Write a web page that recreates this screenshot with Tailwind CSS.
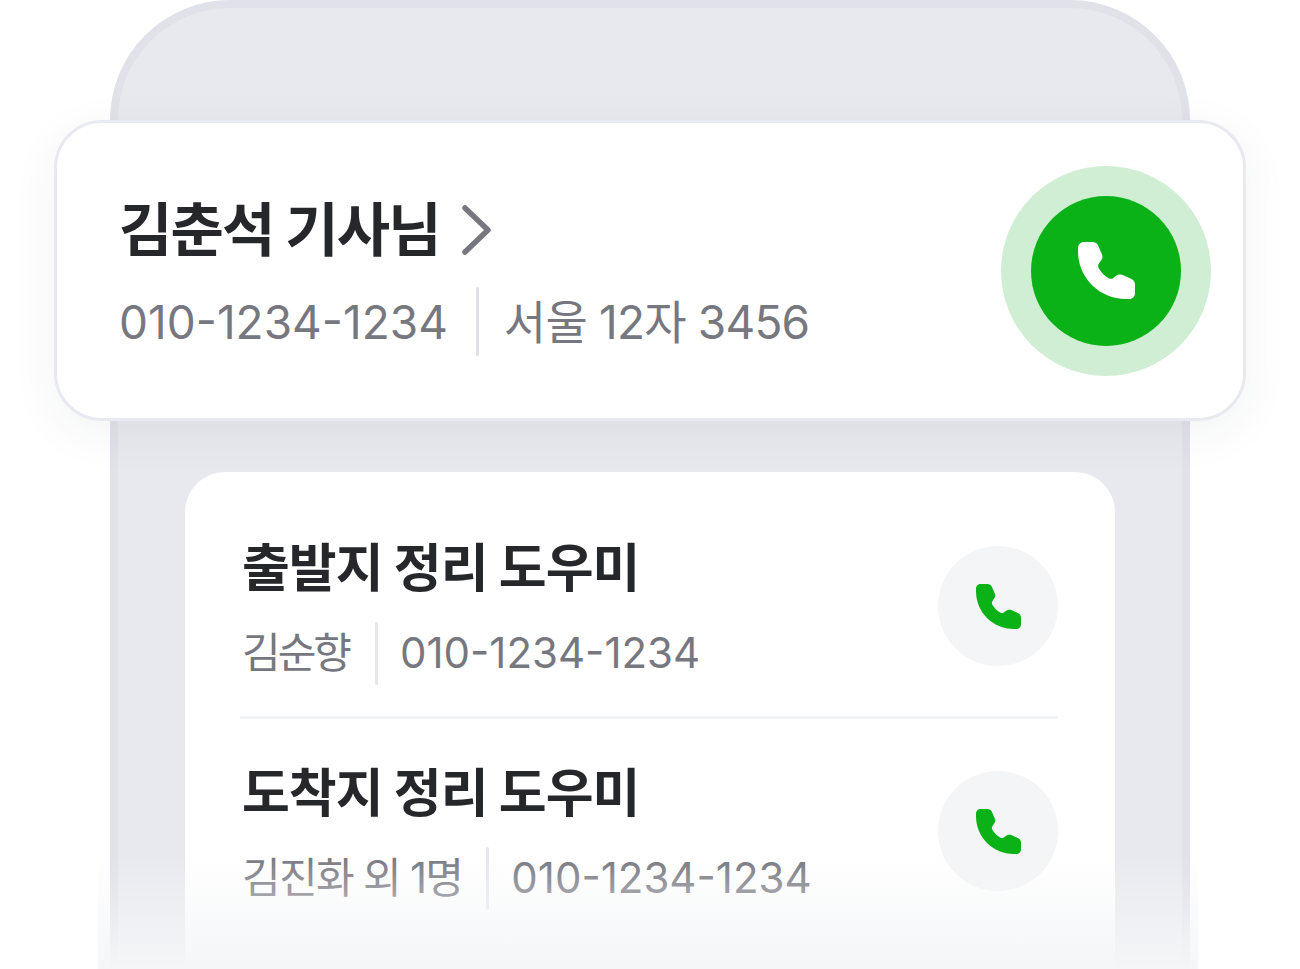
<!DOCTYPE html>
<html lang="ko">
<head>
    <meta charset="UTF-8">
    <meta name="viewport" content="width=device-width, initial-scale=1.0">
    <title>기사님 연락처</title>
    <script src="https://cdn.jsdelivr.net/npm/@tailwindcss/browser@4"></script>
</head>
<body class="bg-white">
    <main class="relative w-[1300px] h-[969px] overflow-hidden bg-white font-['Inter','Noto_Sans_CJK_KR',sans-serif]">
        <!-- 폰 프레임 -->
        <div class="mx-[110px] h-[1100px] rounded-t-[120px] border-[8px] border-b-0 border-[#e0e1e9] bg-[#e8e9ee] pt-[112px]">
            <!-- 기사님 카드 -->
            <section class="relative -mx-[64px] flex h-[301px] items-center justify-between rounded-[48px] border-[3px] border-[#e8e9f1] bg-white pl-[62px] pr-[32px] shadow-[0_12px_48px_rgba(40,44,70,0.06)]">
                <div class="mt-[10px]">
                    <div class="flex items-center gap-[22px]">
                        <h1 class="text-[58px] leading-[70px] font-bold tracking-[-1.9px] text-[#26272b]">김춘석 기사님</h1>
                        <svg class="w-[29px] h-[50px]" viewBox="0 0 29 50" fill="none"><path d="M3 3 L26 25 L3 47" stroke="#77787f" stroke-width="5.500" stroke-linecap="round" stroke-linejoin="round"/></svg>
                    </div>
                    <div class="mt-[22px] flex items-center text-[46px] leading-[68px] text-[#77787f]">
                        <span>010-1234-1234</span>
                        <span class="ml-[28px] mr-[25px] h-[69px] w-[3px] rounded-full bg-[#e0e1e9]"></span>
                        <span class="tracking-[-0.8px]">서울 12자 3456</span>
                    </div>
                </div>
                <div class="flex h-[210px] w-[210px] items-center justify-center rounded-full bg-[#d0eed3]">
                    <div class="flex h-[150px] w-[150px] items-center justify-center rounded-full bg-[#0ab217]">
                        <svg class="w-[57px] h-[57px]" viewBox="0 0 56 56" fill="#ffffff"><path d="M6 0 H14 C17 0 19 1.500 20 4 L23.500 12 C24.500 14.500 24 16.500 22 19 L20.500 21 C19.500 22.500 19.500 24 20.500 26 C23 30 26 33 30 35.500 C32 36.500 33.500 36.500 35 35 L37 33.500 C39 32 41.500 31.500 44 32.500 L52 36 C54.500 37 56 39 56 42 V50 C56 53.500 53.500 56 50 56 H47 C21 56 0 35 0 9 V6 C0 2.500 2.500 0 6 0 Z"/></svg>
                    </div>
                </div>
            </section>
            <!-- 정리 도우미 목록 -->
            <section class="mx-[67px] mt-[51px] h-[600px] rounded-[40px] bg-white pl-[55px] pr-[57px]">
                <div class="flex h-[247px] items-center justify-between border-b-[3px] border-[#f3f4f6] pt-[24px]">
                    <div class="ml-[2px] mt-[10px]">
                        <h2 class="text-[52px] leading-[62px] font-bold tracking-[-1px] text-[#26272b]">출발지 정리 도우미</h2>
                        <div class="mt-[22px] flex items-center text-[42px] leading-[62px] text-[#77787f]">
                            <span class="tracking-[-3px]">김순향</span>
                            <span class="ml-[26px] mr-[22px] h-[63px] w-[3px] rounded-full bg-[#e6e7ed]"></span>
                            <span>010-1234-1234</span>
                        </div>
                    </div>
                    <div class="flex h-[120px] w-[120px] items-center justify-center rounded-full bg-[#f4f5f7]">
                        <svg class="w-[45px] h-[45px]" viewBox="0 0 56 56" fill="#0ab217"><path d="M6 0 H14 C17 0 19 1.500 20 4 L23.500 12 C24.500 14.500 24 16.500 22 19 L20.500 21 C19.500 22.500 19.500 24 20.500 26 C23 30 26 33 30 35.500 C32 36.500 33.500 36.500 35 35 L37 33.500 C39 32 41.500 31.500 44 32.500 L52 36 C54.500 37 56 39 56 42 V50 C56 53.500 53.500 56 50 56 H47 C21 56 0 35 0 9 V6 C0 2.500 2.500 0 6 0 Z"/></svg>
                    </div>
                </div>
                <div class="flex h-[224px] items-center justify-between">
                    <div class="ml-[2px] mt-[10px]">
                        <h2 class="text-[52px] leading-[62px] font-bold tracking-[-1px] text-[#26272b]">도착지 정리 도우미</h2>
                        <div class="mt-[22px] flex items-center text-[42px] leading-[62px] text-[#77787f]">
                            <span class="tracking-[-1.7px]">김진화 외 1명</span>
                            <span class="ml-[24px] mr-[22px] h-[63px] w-[3px] rounded-full bg-[#e6e7ed]"></span>
                            <span>010-1234-1234</span>
                        </div>
                    </div>
                    <div class="flex h-[120px] w-[120px] items-center justify-center rounded-full bg-[#f4f5f7]">
                        <svg class="w-[45px] h-[45px]" viewBox="0 0 56 56" fill="#0ab217"><path d="M6 0 H14 C17 0 19 1.500 20 4 L23.500 12 C24.500 14.500 24 16.500 22 19 L20.500 21 C19.500 22.500 19.500 24 20.500 26 C23 30 26 33 30 35.500 C32 36.500 33.500 36.500 35 35 L37 33.500 C39 32 41.500 31.500 44 32.500 L52 36 C54.500 37 56 39 56 42 V50 C56 53.500 53.500 56 50 56 H47 C21 56 0 35 0 9 V6 C0 2.500 2.500 0 6 0 Z"/></svg>
                    </div>
                </div>
            </section>
        </div>
        <!-- 하단 페이드 -->
        <div class="absolute bottom-0 left-[98px] h-[114px] w-[1100px] bg-gradient-to-b from-white/0 to-[#f5f6f8]"></div>
    </main>
</body>
</html>
